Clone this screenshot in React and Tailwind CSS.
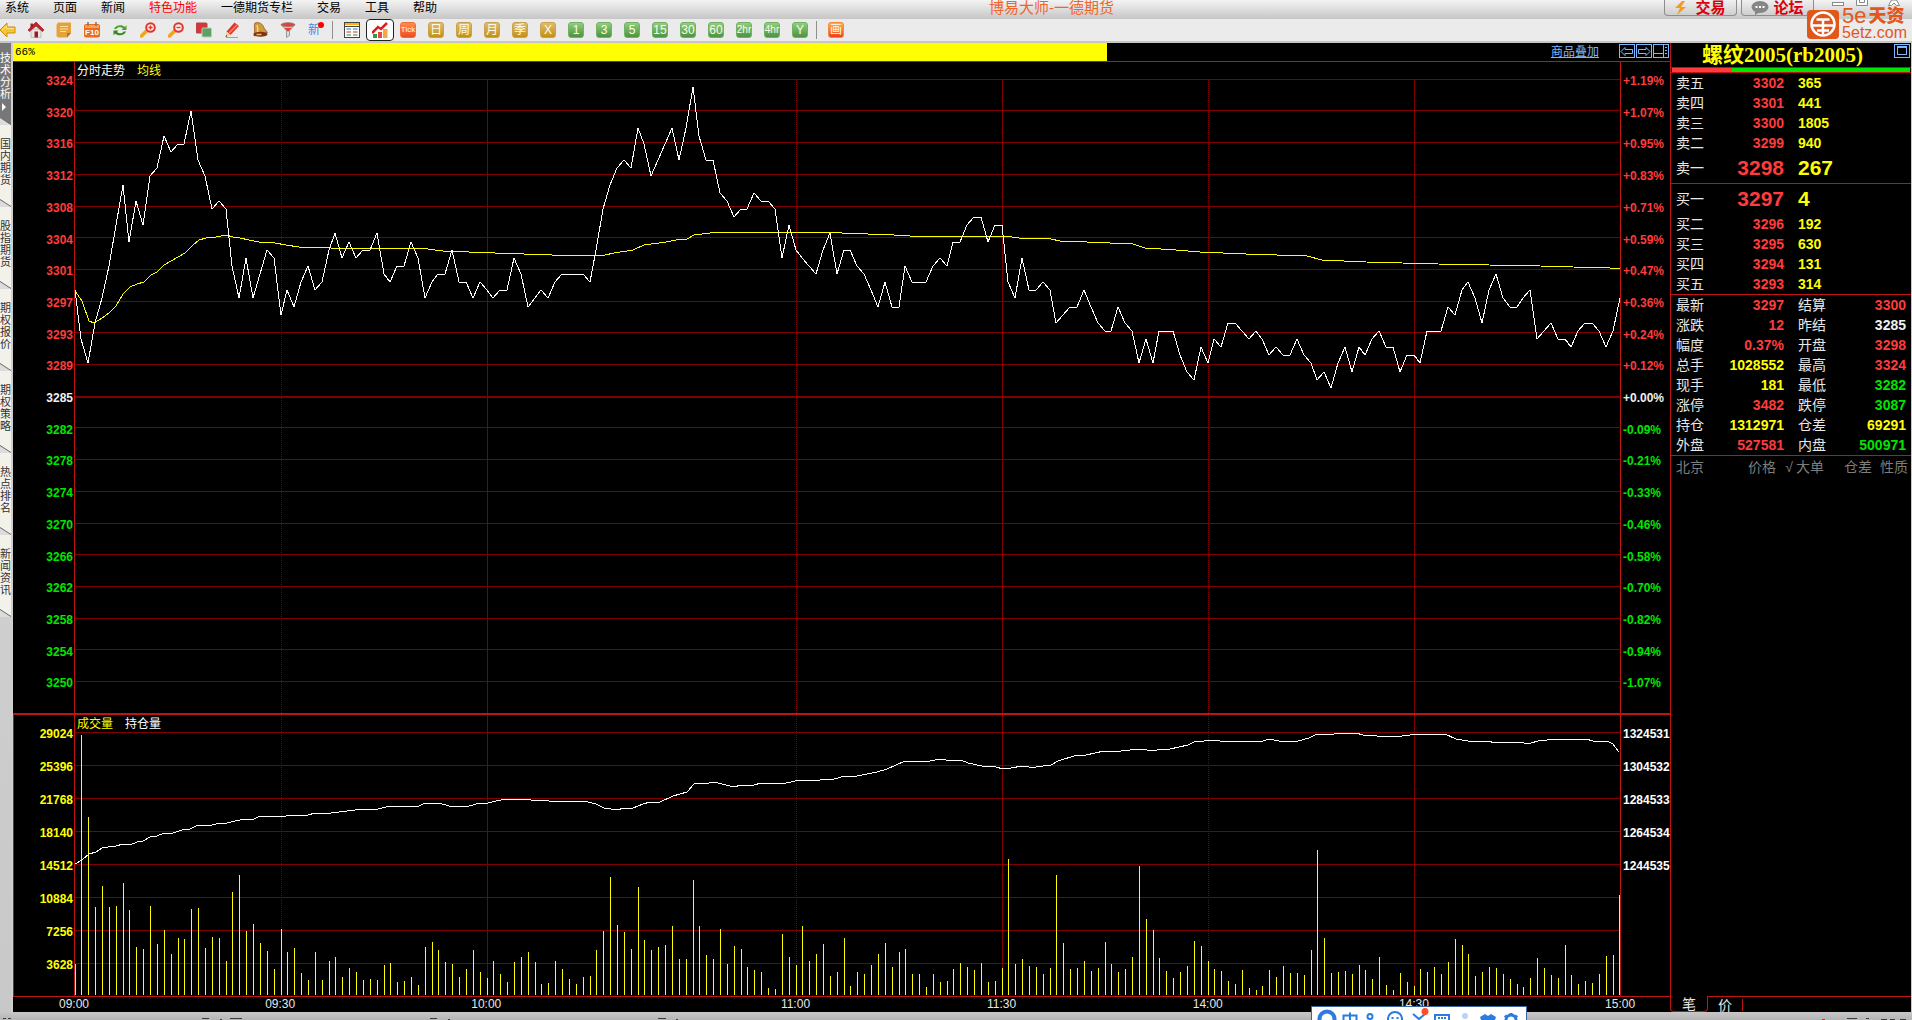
import React from 'react';

const CJK = "font-['Liberation_Sans','Noto_Sans_CJK_SC',sans-serif]";

const MENUS = ['系统', '页面', '新闻', '特色功能', '一德期货专栏', '交易', '工具', '帮助'];

const SIDE_TABS = ['技术分析', '国内期货', '股指期货', '期权报价', '期权策略', '热点排名', '新闻资讯'];

const BASE_PRICE = 3285;
const PRICE_LABELS = [
  3324, 3320, 3316, 3312, 3308, 3304, 3301, 3297, 3293, 3289,
  3285, 3282, 3278, 3274, 3270, 3266, 3262, 3258, 3254, 3250,
];
const PERCENT_LABELS = [
  '+1.19%', '+1.07%', '+0.95%', '+0.83%', '+0.71%', '+0.59%', '+0.47%', '+0.36%', '+0.24%', '+0.12%',
  '+0.00%', '-0.09%', '-0.21%', '-0.33%', '-0.46%', '-0.58%', '-0.70%', '-0.82%', '-0.94%', '-1.07%',
];
const VOLUME_LABELS = ['29024', '25396', '21768', '18140', '14512', '10884', '7256', '3628'];
const HOLD_LABELS = ['1324531', '1304532', '1284533', '1264534', '1244535', '', '', ''];

// 每分钟收盘价相对昨结的跳数
const PRICES = [
  13, 7, 4, 9, 12, 16, 21, 26, 19, 24, 21, 27, 28, 32, 30, 31, 31, 35, 29, 27, 23, 24, 23, 16, 12,
  17, 12, 15, 18, 17, 10, 13, 11, 14, 16, 13, 14, 18, 20, 17, 19, 17, 18, 18, 20, 15, 14, 16, 16, 19,
  17, 12, 14, 15, 15, 18, 14, 14, 12, 14, 13, 12, 13, 13, 17, 15, 11, 12, 13, 12, 14, 15, 15, 15, 15,
  14, 18, 23, 26, 28, 29, 28, 33, 31, 27, 29, 31, 33, 29, 33, 38, 32, 29, 29, 25, 24, 22, 23, 23, 25,
  24, 24, 23, 17, 21, 18, 17, 16, 15, 18, 20, 15, 18, 18, 16, 15, 13, 11, 14, 11, 11, 16, 14, 14, 14,
  16, 17, 16, 19, 19, 21, 22, 22, 19, 21, 21, 14, 12, 17, 13, 13, 14, 13, 9, 10, 11, 11, 13, 11, 9,
  8, 8, 11, 9, 8, 4, 7, 4, 8, 8, 8, 5, 3, 2, 6, 4, 7, 6, 9, 9, 8, 7, 8, 7, 5,
  6, 5, 5, 7, 5, 4, 2, 3, 1, 4, 6, 3, 6, 5, 7, 8, 6, 6, 3, 5, 5, 4, 8, 8, 8,
  11, 10, 13, 14, 12, 9, 13, 15, 12, 11, 11, 12, 13, 7, 8, 9, 7, 7, 6, 8, 9, 9, 8, 6, 8, 12,
];

const VOLUMES = [
  31, 260, 178, 88, 109, 88, 89, 112, 85, 48, 46, 89, 51, 65, 41, 57, 56, 86, 87, 47, 58, 57, 34, 103, 120,
  64, 71, 52, 44, 26, 66, 43, 47, 22, 15, 43, 15, 34, 38, 18, 27, 23, 15, 16, 15, 30, 32, 13, 14, 18,
  10, 48, 53, 45, 33, 31, 18, 26, 45, 23, 17, 34, 21, 13, 33, 38, 43, 33, 11, 12, 34, 26, 16, 11, 18,
  19, 45, 64, 118, 70, 63, 46, 108, 55, 45, 48, 50, 69, 36, 36, 115, 69, 40, 36, 66, 31, 49, 46, 28, 25,
  23, 7, 6, 61, 38, 30, 69, 34, 41, 51, 19, 23, 57, 9, 23, 21, 30, 41, 52, 28, 43, 46, 21, 21, 8,
  21, 13, 14, 26, 32, 28, 25, 32, 13, 14, 27, 136, 31, 36, 29, 28, 21, 27, 120, 52, 26, 27, 34, 24, 27,
  53, 31, 23, 26, 38, 129, 76, 65, 37, 24, 17, 23, 29, 54, 49, 34, 26, 24, 14, 11, 25, 7, 5, 9, 25,
  18, 29, 22, 22, 20, 45, 145, 57, 22, 23, 24, 21, 30, 25, 16, 38, 10, 5, 22, 13, 9, 26, 23, 28, 21,
  33, 56, 50, 41, 19, 23, 28, 27, 21, 16, 11, 8, 17, 37, 27, 20, 17, 50, 20, 11, 14, 12, 21, 39, 40, 100,
];

const AVERAGE =
  '0,229 7,239 14,259 19,261 27,256 34,251 41,244 48,232 55,225 62,222 69,220 76,213 82,210 89,203 103,195 110,191 117,184 124,178 131,176 141,175 151,173 158,175 165,176 174,178 184,180 200,181 211,183 224,185 249,185 256,186 345,186 368,189 420,191 477,193 530,193 539,191 558,188 569,183 591,180 601,178 612,177 619,173 635,171 657,170 737,170 767,171 819,173 835,174 930,174 944,176 976,177 985,179 1012,180 1058,182 1070,186 1101,188 1125,190 1171,192 1232,194 1247,198 1291,200 1363,202 1465,204 1498,205 1535,206 1545,207';

const HOLDING =
  '0,149 7,145 14,139 21,137 27,133 33,132 41,131 48,129 55,130 62,127 68,126 75,122 82,121 89,118 98,118 107,115 115,114 123,110 137,110 145,108 152,108 160,106 170,104 179,104 185,101 202,101 207,102 211,101 233,100 240,98 256,98 280,95 303,94 311,92 321,91 344,91 350,88 364,88 374,91 394,91 405,88 413,88 421,86 432,84 456,85 474,86 481,87 490,86 509,86 521,89 529,93 542,95 549,93 558,93 568,89 575,87 585,87 598,81 612,77 619,69 621,68 634,68 639,67 659,72 666,70 679,70 686,68 695,69 711,68 725,65 745,65 759,64 770,61 782,61 802,57 812,54 830,46 855,46 865,44 871,45 886,45 893,48 907,51 921,52 928,54 936,53 947,51 954,52 961,52 968,51 976,50 983,46 1002,40 1011,40 1029,36 1046,36 1065,34 1079,36 1085,34 1095,34 1113,30 1119,27 1139,25 1145,26 1188,26 1194,24 1204,26 1223,26 1234,23 1242,19 1259,19 1263,18 1281,18 1288,20 1302,21 1327,21 1343,19 1370,19 1381,24 1393,26 1411,26 1422,28 1428,27 1435,28 1441,27 1449,28 1456,28 1463,26 1481,24 1511,24 1518,26 1532,26 1538,29 1544,37';

const PLOT_W = 1545;
const MINUTES = 225;
const minuteX = (m) => Math.floor((PLOT_W * m) / MINUTES);

const V_LINES = [
  { minute: 30, dotted: true },
  { minute: 60, dotted: false },
  { minute: 105, dotted: true },
  { minute: 135, dotted: false },
  { minute: 165, dotted: true },
  { minute: 195, dotted: false },
];

const ASKS = [
  ['卖五', 3302, 365],
  ['卖四', 3301, 441],
  ['卖三', 3300, 1805],
  ['卖二', 3299, 940],
  ['卖一', 3298, 267],
];
const BIDS = [
  ['买一', 3297, 4],
  ['买二', 3296, 192],
  ['买三', 3295, 630],
  ['买四', 3294, 131],
  ['买五', 3293, 314],
];

const RED = 'text-[#ff3b3b]';
const GREEN = 'text-[#00e600]';
const YELLOW = 'text-[#ffff00]';
const WHITE = 'text-[#f0f0f0]';

const STATS = [
  ['最新', '3297', RED, '结算', '3300', RED],
  ['涨跌', '12', RED, '昨结', '3285', WHITE],
  ['幅度', '0.37%', RED, '开盘', '3298', RED],
  ['总手', '1028552', YELLOW, '最高', '3324', RED],
  ['现手', '181', YELLOW, '最低', '3282', GREEN],
  ['涨停', '3482', RED, '跌停', '3087', GREEN],
  ['持仓', '1312971', YELLOW, '仓差', '69291', YELLOW],
  ['外盘', '527581', RED, '内盘', '500971', GREEN],
];

/* ---------- 工具栏图标 ---------- */

const Icon = ({ children }) => (
  <svg className="w-4 h-4 shrink-0" viewBox="0 0 16 16">
    {children}
  </svg>
);

const TOOL_ICONS = [
  {
    name: '后退',
    icon: (
      <Icon>
        <path d="M0 8 7 1v4h8v6H7v4z" fill="#f7c52c" stroke="#d08a10" strokeWidth="1" />
        <path d="M2 8 6.500 4v2.500h7.500" fill="none" stroke="#fde58a" />
      </Icon>
    ),
  },
  {
    name: '首页',
    icon: (
      <Icon>
        <path d="M3 7h10v8.500H3z" fill="#e8e4e0" stroke="#a9a39c" strokeWidth="0.600" />
        <path d="M0 8 8 0l8 8-1.500 1.500L8 4 1.500 9.500z" fill="#c8202c" stroke="#8e1018" strokeWidth="0.600" />
        <path d="M2.500 1.500h2.500v3l-2.500 2z" fill="#a31a22" />
        <path d="M6.500 9.500h3.500v6H6.500z" fill="#9b1c22" />
      </Icon>
    ),
  },
  {
    name: '公告',
    icon: (
      <Icon>
        <path d="M2 0.500h13V11l-4 4.500H2L.500 14V3z" fill="#e3a23a" />
        <path d="M15 11h-4v4.500z" fill="#b87412" />
        <path d="M4 4.500h8M4 7h8M4 9.500h6" stroke="#fbe0a2" />
      </Icon>
    ),
  },
  {
    name: 'F10',
    icon: (
      <Icon>
        <rect x="0" y="2" width="16" height="13.500" rx="2" fill="#ee6b1c" />
        <path d="M1 3h14v3H1z" fill="#f9a05a" />
        <path d="M4 0v4M12 0v4" stroke="#777" strokeWidth="1.500" />
        <text x="8" y="13" textAnchor="middle" fontSize="8" fontWeight="bold" fontFamily="Liberation Sans" fill="#fff">
          F10
        </text>
      </Icon>
    ),
  },
  {
    name: '刷新',
    icon: (
      <Icon>
        <path d="M2 7c1-4 8-5 11-2l1.500-2v5h-5l1.500-1.500C9 4.500 5 5 4.500 7z" fill="#4aa62c" />
        <path d="M14 9.500c-1 4-8 5-11 2L1.500 13.500v-5h5L5 10c2 2 6 1.500 6.500-.500z" fill="#2f8a1c" />
      </Icon>
    ),
  },
  {
    name: '放大',
    icon: (
      <Icon>
        <path d="M1.500 14 6.500 9" stroke="#f2a516" strokeWidth="3.500" strokeLinecap="round" />
        <circle cx="10.500" cy="5.500" r="4.300" fill="#fdeceb" stroke="#e0362c" strokeWidth="2" />
        <path d="M8.500 5.500h4M10.500 3.500v4" stroke="#e0362c" strokeWidth="1.300" />
      </Icon>
    ),
  },
  {
    name: '缩小',
    icon: (
      <Icon>
        <path d="M1.500 14 6.500 9" stroke="#f2a516" strokeWidth="3.500" strokeLinecap="round" />
        <circle cx="10.500" cy="5.500" r="4.300" fill="#fdeceb" stroke="#e0362c" strokeWidth="2" />
        <path d="M8.500 5.500h4" stroke="#e0362c" strokeWidth="1.300" />
      </Icon>
    ),
  },
  {
    name: '叠加',
    icon: (
      <Icon>
        <rect x="0" y="1" width="11" height="10" rx="1" fill="#d8343a" stroke="#a8484c" />
        <rect x="6" y="6" width="9.500" height="9" rx="1" fill="#5f9f62" stroke="#b6d0b4" />
      </Icon>
    ),
  },
  {
    name: '画线',
    icon: (
      <Icon>
        <path d="M2.500 9.500 10.500 0.500l4.500 3.500-8.500 9z" fill="#e5352b" />
        <path d="M5 11 13.500 2.500" stroke="#f58a7c" strokeWidth="1.300" />
        <path d="M2.500 9.500l4 3.500-5 2z" fill="#f1cf9c" />
        <path d="M1.500 15 2.200 13l1.300 1.200z" fill="#333" />
        <path d="M2 15.500h12" stroke="#e08a80" />
      </Icon>
    ),
  },
  {
    name: '预警',
    icon: (
      <Icon>
        <path
          d="M3 1c4-1.500 8 1 9 5l3.500 4.500L2 14l.500-4C3 7 1.500 4 3 1z"
          fill="#d29a3a"
          stroke="#8a4f12"
          strokeWidth="0.700"
        />
        <path d="M5 3c1 3 1 5 .500 8" stroke="#f5d58a" strokeWidth="1.500" fill="none" />
        <ellipse cx="8.500" cy="12.300" rx="7" ry="2.500" fill="#7c3412" />
        <path d="M4.500 12.500h5" stroke="#f0b35a" strokeWidth="1.500" />
      </Icon>
    ),
  },
  {
    name: '筛选',
    icon: (
      <Icon>
        <path d="M1.500 2.500 6.500 9v6.500l3-2V9l5-6.500z" fill="#d9dde0" stroke="#80868c" strokeWidth="0.800" />
        <ellipse cx="8" cy="2.800" rx="7" ry="2.200" fill="#e04338" stroke="#8b8f94" strokeWidth="0.700" />
        <path d="M4.500 6h7L8.500 9.500h-1z" fill="#e04338" />
      </Icon>
    ),
  },
];

const GOLD = 'bg-gradient-to-b from-[#dcbc6c] to-[#c49100] border-[#c9a24a]';
const LEAF = 'bg-gradient-to-b from-[#8fce7c] to-[#4d9440] border-[#74b065]';
const PERIODS = [
  ['Tick', 'bg-gradient-to-b from-[#ff8a4a] to-[#ee4a22] border-[#f0703c] text-[8px]'],
  ['日', `${GOLD} text-[12px]`],
  ['周', `${GOLD} text-[12px]`],
  ['月', `${GOLD} text-[12px]`],
  ['季', `${GOLD} text-[12px]`],
  ['X', `${GOLD} text-[12px]`],
  ['1', `${LEAF} text-[12px]`],
  ['3', `${LEAF} text-[12px]`],
  ['5', `${LEAF} text-[12px]`],
  ['15', `${LEAF} text-[12px]`],
  ['30', `${LEAF} text-[12px]`],
  ['60', `${LEAF} text-[12px]`],
  ['2hr', `${LEAF} text-[10px]`],
  ['4hr', `${LEAF} text-[10px]`],
  ['Y', `${LEAF} text-[12px]`],
];

const Tile = ({ label, look }) => (
  <button
    className={`w-4 h-4 shrink-0 rounded-[3px] border flex items-center justify-center leading-none whitespace-nowrap text-[#fffbe8] ${look}`}
  >
    {label}
  </button>
);

const Divider = () => <div className="w-px h-[18px] bg-[#8f8f8f] ml-2 mr-[11px] shrink-0" />;

const MenuBar = () => (
  <header className="relative h-[19px] shrink-0 flex items-start justify-between bg-gradient-to-b from-[#f4f4f4] to-[#c6c6c6] overflow-hidden">
    <nav className="flex gap-6 pl-[5px] text-xs leading-4 text-black">
      {MENUS.map((m) => (
        <a key={m} href="#" className={m === '特色功能' ? 'text-[#ff0000]' : ''}>
          {m}
        </a>
      ))}
    </nav>
    <h1 className="absolute left-[55%] -translate-x-1/2 text-[15px] leading-4 text-[#f0642c] whitespace-nowrap">
      博易大师-一德期货
    </h1>
    <div className="flex items-start gap-1 text-[15px] leading-[14px] font-bold text-[#d8000c]">
      <button className="w-[73px] h-4 flex items-center justify-center gap-2 rounded-b border border-t-0 border-[#8d8d8d] bg-gradient-to-b from-[#efefef] to-[#cfcfcf]">
        <svg className="w-3 h-[14px]" viewBox="0 0 12 14">
          <path d="M7 0 0 7h5l-3 7 9-8H6l4-6z" fill="#f79a1c" />
        </svg>
        交易
      </button>
      <button className="w-[73px] h-4 flex items-center justify-center gap-1 rounded-b border border-t-0 border-[#8d8d8d] bg-gradient-to-b from-[#efefef] to-[#cfcfcf]">
        <svg className="w-[18px] h-[14px]" viewBox="0 0 18 14">
          <ellipse cx="9" cy="6" rx="8.500" ry="6" fill="#868686" />
          <path d="M4 10v4l5-3z" fill="#868686" />
          <path d="M4.500 6h2M8 6h2M11.500 6h2" stroke="#fff" strokeWidth="2" />
        </svg>
        论坛
      </button>
      <div className="flex gap-3 pl-[14px] pr-3">
        <button aria-label="最小化">
          <svg className="w-3 h-[7px]" viewBox="0 0 12 7">
            <rect x="0.500" y="2.500" width="11" height="3" fill="#fff" stroke="#888" />
          </svg>
        </button>
        <button aria-label="最大化">
          <svg className="w-3 h-[7px]" viewBox="0 0 12 7">
            <path d="M.500 0v5.500h11V0M3.500 0v2.500h5V0" fill="#fff" stroke="#888" />
          </svg>
        </button>
        <button aria-label="关闭" className="ml-2">
          <svg className="w-3 h-[7px]" viewBox="0 0 12 7">
            <path d="M3.500 0 .500 5.500h3L6 3l2.500 2.500h3L8.500 0z" fill="#fff" stroke="#888" />
          </svg>
        </button>
      </div>
    </div>
  </header>
);

const Brand = () => (
  <div className="absolute top-[7px] right-[5px] z-10 flex items-center gap-[3px] text-[#e4561c]">
    <svg className="w-8 h-[30px]" viewBox="0 0 32 30">
      <rect width="32" height="29" y="1" rx="4" fill="#e0561b" />
      <circle cx="16" cy="15" r="11.500" fill="none" stroke="#fff" strokeWidth="2.500" />
      <path d="M9.500 10.500h13M4 16.500h24M16 10.500v15M10 21.500h12" stroke="#fff" strokeWidth="2.500" fill="none" />
    </svg>
    <div className="flex flex-col">
      <div className="flex items-center gap-[2px] h-[18px] leading-[18px]">
        <span className="text-[22px]">5e</span>
        <span className="text-[18px] font-black">天资</span>
      </div>
      <div className="text-[16px] leading-4">5etz.com</div>
    </div>
  </div>
);

const ToolBar = () => (
  <div className="h-6 shrink-0 flex items-center bg-[#ebebeb] border-b-2 border-[#c9c5c2]">
    <div className="flex items-center gap-3">
      {TOOL_ICONS.map((t) => (
        <button key={t.name} aria-label={t.name}>
          {t.icon}
        </button>
      ))}
      <button className="relative w-4 h-4 text-xs leading-4 text-left text-[#3b8de8]">
        新
        <span className="absolute top-0 right-0 w-[6px] h-[6px] rounded-full bg-[#ff0000]" />
      </button>
    </div>
    <Divider />
    <div className="flex items-center gap-3">
      <button aria-label="报价表">
        <Icon>
          <rect x="0.500" y="0.500" width="15" height="15" fill="#fff" stroke="#444" />
          <path d="M1 2h14" stroke="#ffb400" strokeWidth="2" />
          <path d="M1 4.500h14" stroke="#444" />
          <path d="M2.500 7h4.500M9 7h4.500" stroke="#2b6fd0" />
          <path d="M2.500 10h4.500M9 10h4.500" stroke="#cf2c2c" />
          <path d="M2.500 13h4.500M9 13h4.500" stroke="#1c8a3a" />
        </Icon>
      </button>
      <button
        aria-label="分时图"
        className="w-7 h-[22px] -mx-[6px] flex items-center justify-center rounded border border-[#222] bg-white"
      >
        <Icon>
          <path d="M1 12h4v4H1z" fill="#2f9a44" />
          <path d="M6 10h4v6H6z" fill="#e04a3a" />
          <path d="M11 7h4.500v9H11z" fill="#f0a942" />
          <path d="M0 11 6 5l3 2 6-6" fill="none" stroke="#d81e1e" strokeWidth="2.500" />
        </Icon>
      </button>
      {PERIODS.map(([label, look]) => (
        <Tile key={label} label={label} look={look} />
      ))}
    </div>
    <Divider />
    <Tile label="画" look="bg-gradient-to-b from-[#ffb04a] to-[#ee3a1c] border-[#f58a3c] text-[12px]" />
  </div>
);

const SideTabs = () => (
  <aside className="w-[13px] shrink-0 flex flex-col bg-gradient-to-b from-[#d8d8d8] to-[#c8c8c8] border-r-2 border-[#cfcfcf]">
    {SIDE_TABS.map((tab, i) => (
      <button
        key={tab}
        className={`h-[82px] shrink-0 flex flex-col items-start text-[11px] leading-3 ${
          i === 0 ? 'bg-[#777] text-white pt-[9px]' : 'bg-[#f3f2ea] text-[#333] pt-[13px]'
        }`}
      >
        {tab.split('').map((c, n) => (
          <span key={n} className="h-3">
            {c}
          </span>
        ))}
        {i === 0 && (
          <svg className="mt-[3px] ml-[2px] w-1 h-2 shrink-0" viewBox="0 0 4 8">
            <path d="M0 0v8l4-4z" fill="#fff" />
          </svg>
        )}
        <svg className="mt-auto w-[11px] h-2 shrink-0" viewBox="0 0 11 8">
          <path d="M0 0v8h11z" fill="#dcdcdc" />
          <path d="M0 .500 11 7.500" stroke="#666" />
        </svg>
      </button>
    ))}
  </aside>
);

const VerticalLines = ({ top, bottom }) =>
  V_LINES.map(({ minute, dotted }) => (
    <line
      key={minute}
      x1={minuteX(minute) + 0.5}
      x2={minuteX(minute) + 0.5}
      y1={top}
      y2={bottom}
      stroke="#800000"
      strokeDasharray={dotted ? '1 1' : undefined}
    />
  ));

const priceColor = (i) => (i < 10 ? RED : i === 10 ? WHITE : GREEN);

const PriceChart = () => (
  <section className="flex-[651] min-h-0 flex text-xs leading-[14px] font-bold">
    <div className="w-[61px] shrink-0 flex flex-col pt-3 pb-[5px] pr-px text-right">
      {PRICE_LABELS.map((p, i) => (
        <div key={p} className={`flex-1 min-h-0 ${priceColor(i)}`}>
          {p}
        </div>
      ))}
    </div>
    <div className="relative flex-1 min-w-0 border-x border-[#c01414]">
      <svg
        className="w-full h-full"
        viewBox="0 0 1545 651"
        preserveAspectRatio="none"
        shapeRendering="crispEdges"
        fill="none"
      >
        {PRICE_LABELS.map((p, i) => (
          <rect
            key={p}
            x="0"
            y={Math.floor(17.2 + 31.7 * i)}
            width={PLOT_W}
            height={p === BASE_PRICE ? 2 : 1}
            fill="#800000"
          />
        ))}
        <VerticalLines top={18} bottom={651} />
        <polyline points={AVERAGE} stroke="#ffff00" />
        <polyline points={PRICES.map((n, i) => `${minuteX(i)},${Math.round(334 - 8.13 * n)}`).join(' ')} stroke="#fff" />
      </svg>
      <div className="absolute top-px left-[2px] flex gap-3 font-normal leading-4">
        <span className="text-white">分时走势</span>
        <span className="text-[#ffff00]">均线</span>
      </div>
    </div>
    <div className="w-[49px] shrink-0 flex flex-col pt-3 pb-[5px] pl-[2px]">
      {PERCENT_LABELS.map((p, i) => (
        <div key={p} className={`flex-1 min-h-0 ${priceColor(i)}`}>
          {p}
        </div>
      ))}
    </div>
  </section>
);

const VolumeChart = () => (
  <section className="flex-[281] min-h-0 flex text-xs leading-[14px] font-bold border-l border-[#c01414]">
    <div className="w-[60px] shrink-0 flex flex-col pt-3 pb-[5px] pr-px text-right text-[#ffff00]">
      {VOLUME_LABELS.map((v) => (
        <div key={v} className="flex-1 min-h-0">
          {v}
        </div>
      ))}
    </div>
    <div className="relative flex-1 min-w-0 border-x border-[#c01414]">
      <svg
        className="w-full h-full"
        viewBox="0 0 1545 281"
        preserveAspectRatio="none"
        shapeRendering="crispEdges"
        fill="none"
      >
        {VOLUME_LABELS.map((v, i) => (
          <rect key={v} x="0" y={17 + 33 * i} width={PLOT_W} height="1" fill="#800000" />
        ))}
        <VerticalLines top={0} bottom={281} />
        {VOLUMES.map((h, i) => (
          <rect key={i} x={Math.min(minuteX(i), PLOT_W - 1)} y={280 - h} width="1" height={h} fill="#ffff00" />
        ))}
        <polyline points={HOLDING} stroke="#fff" />
      </svg>
      <div className="absolute top-px left-[2px] flex gap-3 font-normal leading-4">
        <span className="text-[#ffff00]">成交量</span>
        <span className="text-white">持仓量</span>
      </div>
    </div>
    <div className="w-[49px] shrink-0 flex flex-col pt-3 pb-[5px] pl-[2px] text-white whitespace-nowrap">
      {HOLD_LABELS.map((v, i) => (
        <div key={i} className="flex-1 min-h-0">
          {v}
        </div>
      ))}
    </div>
  </section>
);

const TimeTick = ({ children }) => <span className="inline-block -translate-x-1/2">{children}</span>;

const TimeAxis = () => (
  <div className="h-[15px] shrink-0 flex pl-[61px] pr-[50px] text-xs leading-[14px] text-[#e8e8e8]">
    <div className="flex-[30] w-0"><TimeTick>09:00</TimeTick></div>
    <div className="flex-[30] w-0"><TimeTick>09:30</TimeTick></div>
    <div className="flex-[45] w-0"><TimeTick>10:00</TimeTick></div>
    <div className="flex-[30] w-0"><TimeTick>11:00</TimeTick></div>
    <div className="flex-[30] w-0"><TimeTick>11:30</TimeTick></div>
    <div className="flex-[30] w-0"><TimeTick>14:00</TimeTick></div>
    <div className="flex-[30] w-0"><TimeTick>14:30</TimeTick></div>
    <div className="w-0"><TimeTick>15:00</TimeTick></div>
  </div>
);

const ChartPane = () => (
  <main className="flex-1 min-w-0 flex flex-col bg-black">
    <div className="h-[18px] shrink-0 flex justify-between">
      <div className="w-[66%] bg-[#ffff00] pl-[2px] font-['Liberation_Mono',monospace] text-[11px] leading-[18px] text-black">
        66%
      </div>
      <div className="flex items-start">
        <a href="#" className="mr-5 text-xs leading-[18px] underline text-[#7ab8ff]">
          商品叠加
        </a>
        <div className="flex gap-px pt-px pr-px">
          <button aria-label="左移" className="w-4 h-[14px] border border-[#7ab8ff]">
            <svg viewBox="0 0 14 12" fill="none" stroke="#7ab8ff">
              <path d="M1 6.500 5 2.500v2h7.500v4H5v2z" />
            </svg>
          </button>
          <button aria-label="右移" className="w-4 h-[14px] border border-[#7ab8ff]">
            <svg viewBox="0 0 14 12" fill="none" stroke="#7ab8ff">
              <path d="M13 6.500 9 2.500v2H1.500v4H9v2z" />
            </svg>
          </button>
          <button aria-label="布局" className="w-4 h-[14px] border border-[#7ab8ff]">
            <svg viewBox="0 0 14 12" fill="none" stroke="#7ab8ff" shapeRendering="crispEdges">
              <path d="M0 8.500h9.500M9.500 0v12M11 2.500h2M11 5.500h2M11 8.500h2" />
            </svg>
          </button>
        </div>
      </div>
    </div>
    <div className="h-px shrink-0 bg-[#c01414]" />
    <PriceChart />
    <div className="h-[2px] shrink-0 bg-[#c01414]" />
    <VolumeChart />
    <div className="h-px shrink-0 bg-[#c01414]" />
    <TimeAxis />
  </main>
);

const QuoteTable = ({ rows, best }) => (
  <table className="w-full table-fixed text-sm leading-[14px] border-b border-[#c01414] border-separate border-spacing-0">
    <colgroup>
      <col className="w-[45px]" />
      <col className="w-[68px]" />
      <col />
    </colgroup>
    <tbody>
      {rows.map(([label, price, volume]) => {
        const big = label === best;
        return (
          <tr key={label} className={big ? 'h-[30px]' : 'h-5'}>
            <th scope="row" className="p-0 pl-[5px] font-normal text-left text-[#e8e8e8]">
              {label}
            </th>
            <td className={`p-0 text-right font-bold text-[#ff3b3b] ${big ? 'text-[21px]' : ''}`}>{price}</td>
            <td className={`p-0 pl-[14px] font-bold text-[#ffff00] ${big ? 'text-[21px]' : ''}`}>{volume}</td>
          </tr>
        );
      })}
    </tbody>
  </table>
);

const QuotePane = () => (
  <aside className="w-[242px] shrink-0 flex flex-col bg-black border-r border-r-[#c8c8c8]">
    <div className="flex-1 min-h-0 flex flex-col border-l border-[#c01414]">
      <div className="h-6 flex items-start">
        <h2 className="flex-1 text-center font-['Liberation_Serif','Noto_Sans_CJK_SC',serif] text-[21px] leading-6 font-bold text-[#ffff00]">
          螺纹2005(rb2005)
        </h2>
        <button aria-label="最大化面板" className="mt-px mr-px w-4 h-[14px] border border-[#7ab8ff]">
          <svg viewBox="0 0 14 12" fill="none" stroke="#7ab8ff" shapeRendering="crispEdges">
            <path d="M2.500 1.500h9v8h-9zM2 2.500h10" />
          </svg>
        </button>
      </div>
      <div className="h-[6px] flex border-y border-[#c01414] px-px">
        <div className="w-1/4 bg-[#ff3b3b]" />
        <div className="flex-1 bg-[#00e600]" />
      </div>
      <QuoteTable rows={ASKS} best="卖一" />
      <QuoteTable rows={BIDS} best="买一" />
      <table className="w-full table-fixed text-sm leading-[14px] border-b border-[#c01414] border-separate border-spacing-0">
        <colgroup>
          <col className="w-[45px]" />
          <col className="w-[68px]" />
          <col className="w-[45px]" />
          <col />
        </colgroup>
        <tbody>
          {STATS.map(([a, av, ac, b, bv, bc]) => (
            <tr key={a} className="h-5">
              <th scope="row" className="p-0 pl-[5px] font-normal text-left text-[#e8e8e8]">{a}</th>
              <td className={`p-0 text-right font-bold ${ac}`}>{av}</td>
              <th scope="row" className="p-0 pl-[14px] font-normal text-left text-[#e8e8e8]">{b}</th>
              <td className={`p-0 pr-[5px] text-right font-bold ${bc}`}>{bv}</td>
            </tr>
          ))}
        </tbody>
      </table>
      <div className="flex justify-between pl-[5px] pr-[3px] text-sm leading-[22px] text-[#7d7d7d]">
        <span>北京</span>
        <div className="flex">
          <span className="mr-[6px]">价格</span>
          <span className="w-[14px] text-center">√</span>
          <span className="mr-5">大单</span>
          <span className="mr-2">仓差</span>
          <span>性质</span>
        </div>
      </div>
    </div>
    <div className="h-4 shrink-0 flex text-sm leading-[14px] text-[#e8e8e8]">
      <button className="w-[38px] rounded-b border border-t-0 border-[#c01414]">笔</button>
      <div className="flex-1 flex border-t border-[#c01414]">
        <button className="w-[35px] h-3 mt-[2px] leading-[11px] border-r border-[#c01414]">价</button>
      </div>
    </div>
  </aside>
);

const ImeBar = () => (
  <div className="absolute bottom-0 right-[385px] w-[216px] h-[14px] z-10 bg-white border border-b-0 border-[#3c64a0] overflow-hidden">
    <svg className="w-[214px] h-[13px]" viewBox="0 0 214 13" fill="none" stroke="#2b7be0" strokeWidth="2">
      <circle cx="15" cy="12" r="7.500" strokeWidth="4" />
      <path d="M31.500 14V8.500h13V14M38 5.500V14" />
      <circle cx="58" cy="9.500" r="2.500" />
      <circle cx="83" cy="12" r="7" />
      <path d="M80.500 10v2M85.500 10v2" />
      <path d="M101 7l6 5 6-5" />
      <circle cx="113" cy="4.500" r="3.500" fill="#fa4d2c" stroke="none" />
      <path d="M123 14V8h14v6" />
      <path d="M126 11h9" strokeDasharray="2 1" />
      <circle cx="153" cy="9" r="3" fill="#bcd3f5" stroke="none" />
      <path d="M168 10l5-3 3 2 3-2 5 3-1 3h-14z" fill="#2b7be0" stroke="none" />
      <circle cx="199" cy="13" r="5" strokeWidth="3" />
      <path d="M199 6v3M193 8.500l2 2M205 8.500l-2 2" strokeWidth="3" />
    </svg>
  </div>
);

const StatusBar = () => (
  <footer className="h-2 shrink-0 flex justify-between bg-gradient-to-b from-[#c9c6c6] to-[#b4b4b4] overflow-hidden">
    <svg className="w-[680px] h-2" viewBox="0 0 680 8" stroke="#3c3c3c" shapeRendering="crispEdges">
      <path d="M3 6.500h3M8 6.500h3M202 6.500h7M220 7.500h2M230 6.500h12M430 6.500h7M448 7.500h2M658 6.500h8M676 7.500h2" />
    </svg>
    <svg className="w-[100px] h-2" viewBox="0 0 100 8" stroke="#3c3c3c" shapeRendering="crispEdges">
      <path d="M10 7.500h3" stroke="#e02020" />
      <path d="M35 6.500h10M54 6.500h3M69 7.500h6M78 7.500h5M88 7.500h6" />
    </svg>
  </footer>
);

export default function App() {
  return (
    <div className={`relative h-screen flex flex-col overflow-hidden bg-[#c8c8c8] ${CJK}`}>
      <MenuBar />
      <Brand />
      <ToolBar />
      <div className="flex-1 min-h-0 flex">
        <SideTabs />
        <ChartPane />
        <QuotePane />
      </div>
      <StatusBar />
      <ImeBar />
    </div>
  );
}
